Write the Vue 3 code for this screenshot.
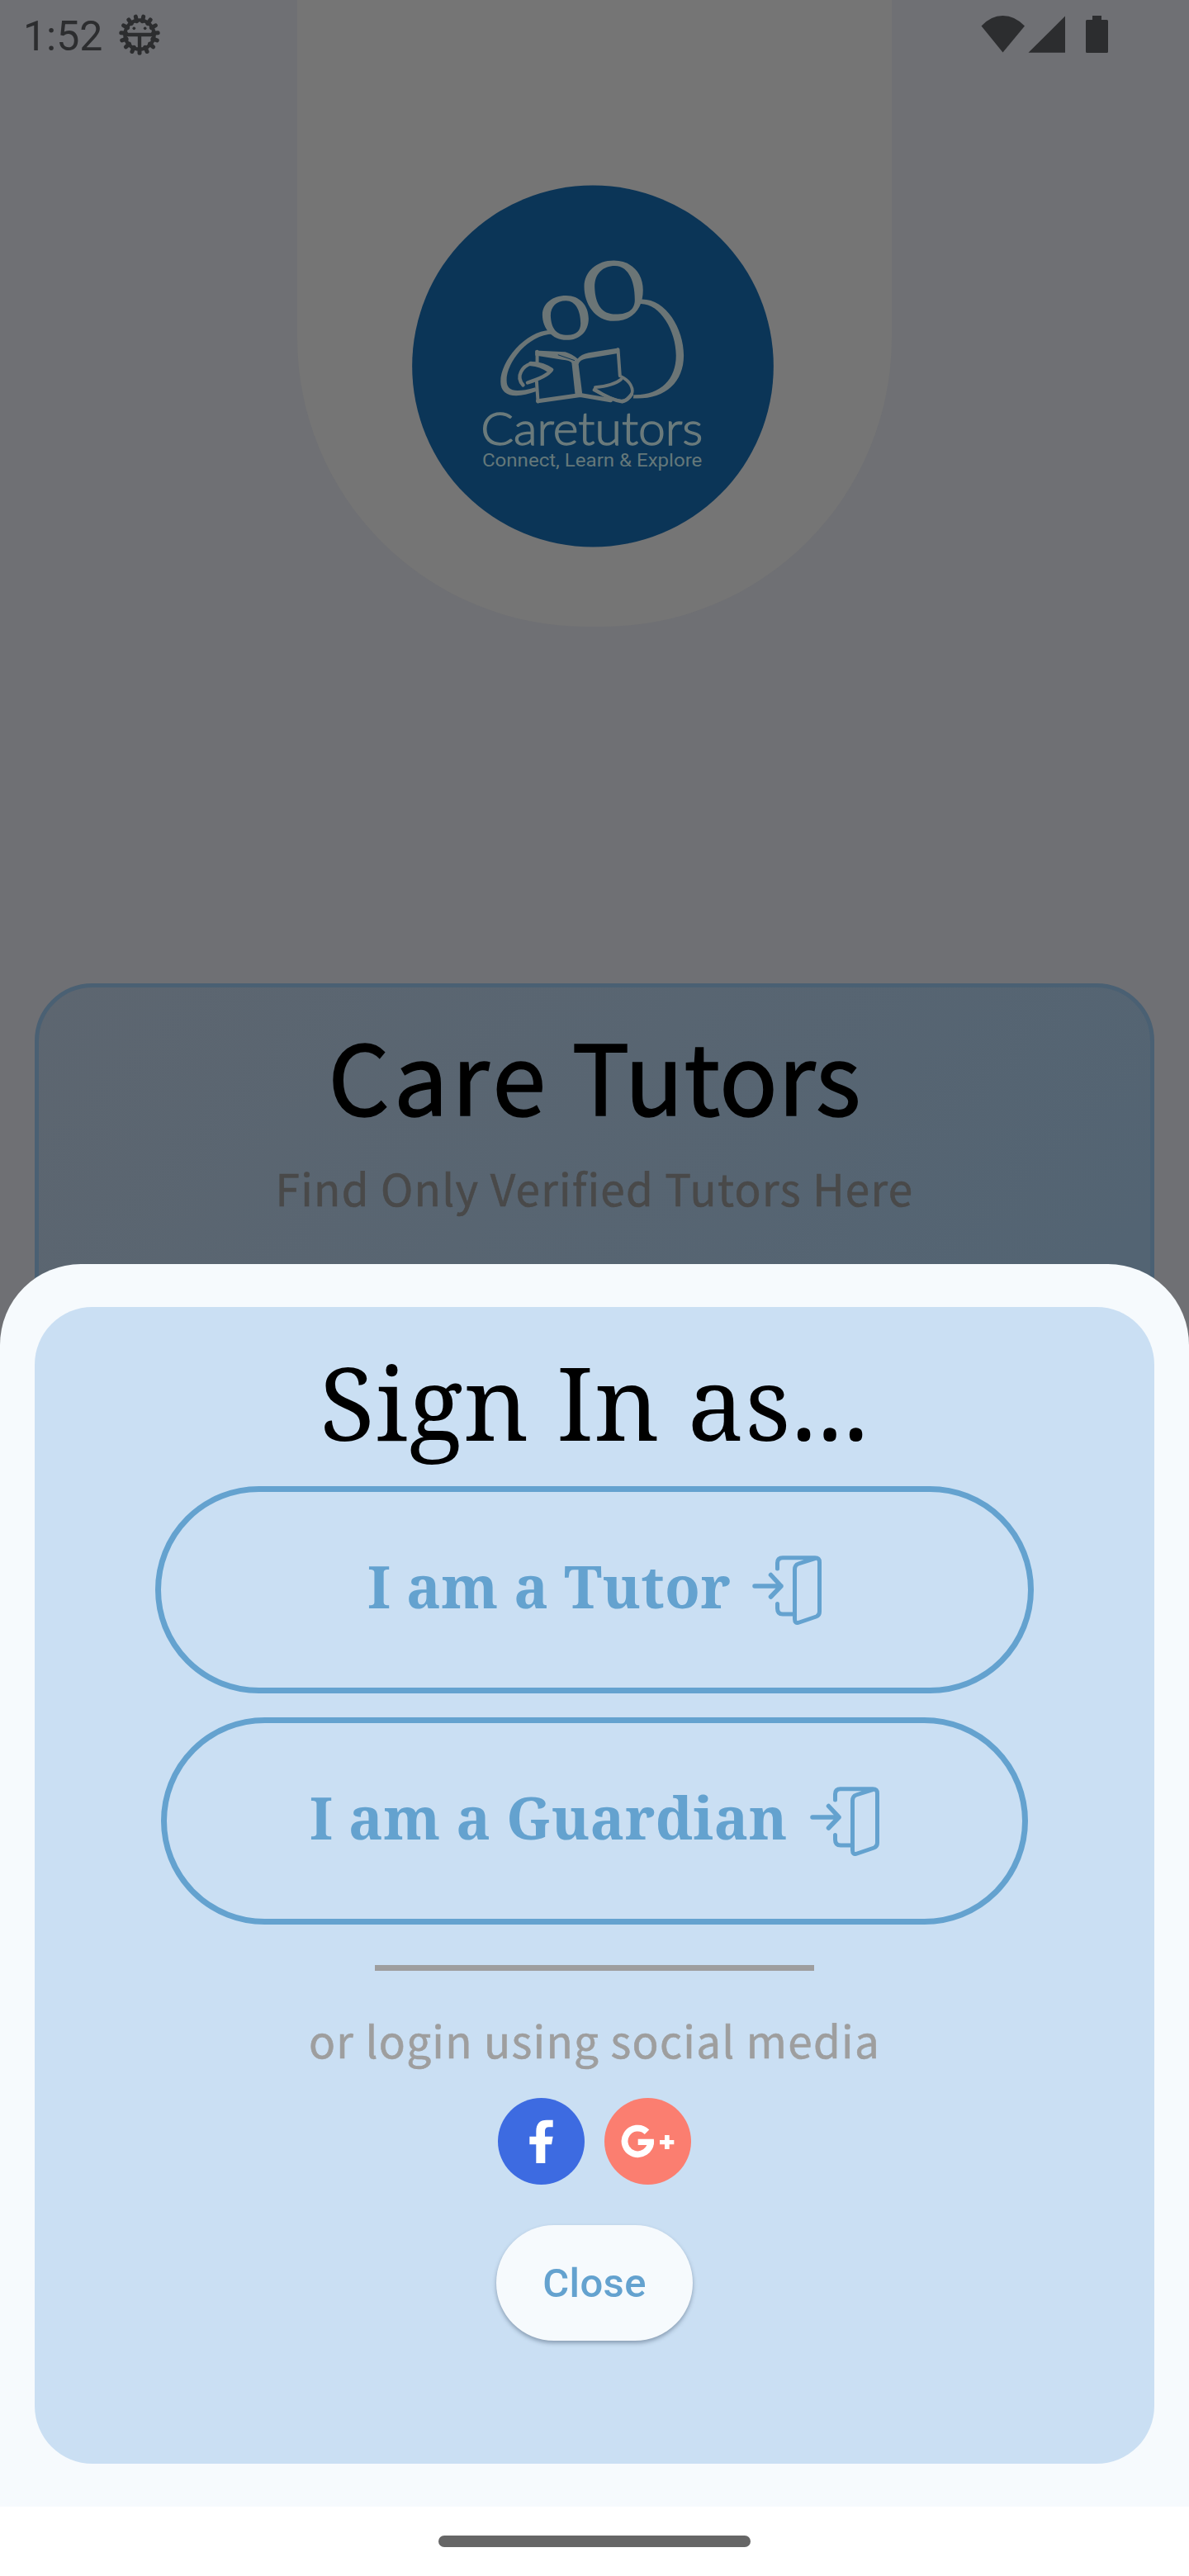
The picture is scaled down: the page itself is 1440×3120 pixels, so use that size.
<script setup>
const roles = [
  { id: 'tutor', label: 'I am a Tutor' },
  { id: 'guardian', label: 'I am a Guardian' },
]
const teeth = Array.from({ length: 15 }, (_, i) => i * 24)
</script>

<template>
  <div class="screen">
    <header class="status">
      <span class="clock">1:52</span>
      <svg class="debug" viewBox="433 52 150 150" width="50" height="50">
        <g stroke="#2c2d2f" stroke-width="15" stroke-linecap="round">
          <line v-for="a in teeth" :key="a" x1="508" y1="177" x2="508" y2="194" :transform="`rotate(${a} 508 127)`" />
        </g>
        <circle cx="508" cy="127" r="53" fill="none" stroke="#2c2d2f" stroke-width="13" />
        <path d="M460 127H556M508 127V176" stroke="#2c2d2f" stroke-width="13" />
        <circle cx="488" cy="104" r="5.5" fill="#2c2d2f" />
        <circle cx="528" cy="104" r="5.5" fill="#2c2d2f" />
      </svg>
      <svg class="signals" viewBox="0 0 156 46" width="156" height="46" fill="#2c2d2f">
        <path d="M0.5 12.5Q12 0 26.5 0T53 12.5L26.5 44.5Z" />
        <path d="M57.5 44.8L102 0.5V44.8Z" />
        <path d="M135 0h11v5h6.500q1.500 0 1.500 1.500v37q0 1.500-1.500 1.500h-24q-1.500 0-1.500-1.500v-37q0-1.500 1.500-1.500h6.500z" />
      </svg>
    </header>

    <div class="arch">
      <svg class="logo" viewBox="58 71 1315 1316" width="438" height="439">
        <ellipse cx="715.500" cy="729" rx="657" ry="657.500" fill="#0b3557" />
        <g fill="#6b7576" fill-rule="evenodd">
          <path d="M792 345C856 345 898 390 898 452C898 522 858 565 792 565C722 565 684 500 684 440C684 385 730 345 792 345ZM796 364C752 364 722 392 722 440C724 505 748 540 798 540C846 540 868 522 868 488C868 415 842 364 796 364Z" />
          <path d="M618 472C668 472 700 508 700 556C700 602 668 634 620 634C568 634 532 592 532 542C532 502 568 472 618 472ZM618 491C584 491 562 512 562 545C564 592 582 616 624 616C656 616 671 600 671 574C671 526 652 491 618 491Z" />
          <path d="M888 486C978 480 1046 590 1046 690C1046 790 975 852 862 846L864 833C960 836 1018 778 1018 690C1018 600 960 500 888 502Z" />
          <path d="M560 598C470 602 380 710 380 785C380 838 430 850 512 820L506 806C435 826 402 822 402 780C402 715 480 614 570 612Z" />
          <path d="M506 672L615 677Q640 684 660 702Q672 686 700 680L808 663L810 682L690 702Q668 706 663 722L640 718Q632 708 605 706L506 690Z" />
          <path d="M638 710L662 710L678 838L652 840Z" />
        </g>
        <g fill="none" stroke="#6b7576" stroke-width="12" stroke-linecap="round" stroke-linejoin="round">
          <path d="M513 676V714M511 785L516 858" />
          <path d="M516 856L670 834L780 853" stroke-width="15" />
          <path d="M807 668L814 764" />
          <path d="M462 798C432 765 462 728 490 720Q530 716 566 742Q548 768 478 789" stroke-width="13" />
          <path d="M490 720Q525 722 558 745" stroke-width="17" />
          <path d="M724 806Q790 800 818 777M820 768C850 782 866 812 856 832C836 868 806 862 720 816" stroke-width="11" />
          <path d="M722 814Q780 852 822 858Q840 854 856 832" stroke-width="13" />
          <path d="M590 688L648 708" stroke="#0b3557" stroke-width="3" />
        </g>
        <text class="brand" x="308" y="1016" textLength="808" lengthAdjust="spacingAndGlyphs">Caretutors</text>
        <text class="tagline" x="313" y="1094" textLength="800" lengthAdjust="spacingAndGlyphs">Connect, Learn &amp; Explore</text>
      </svg>
    </div>

    <main class="card">
      <h1><span class="wide">Care</span> Tutors</h1>
      <p>Find Only Verified Tutors Here</p>
    </main>

    <section class="sheet">
      <div class="panel">
        <h2>Sign In as...</h2>
        <button v-for="r in roles" :key="r.id" class="role" :class="r.id">
          <span>{{ r.label }}</span>
          <svg viewBox="0 0 84 84" width="84" height="84" fill="none" stroke="#64a2cf" stroke-width="5" stroke-linecap="round" stroke-linejoin="round">
            <path d="M30.500 16V9Q30.500 2.700 37 2.700H76Q81.500 2.700 81.500 8V68Q81.500 72.500 77.500 74L57 81Q51.500 83 51.500 77V17Q51.500 11.500 56 10L76 3.500" />
            <path d="M30.500 58.500V64Q30.500 71 37 71H51" />
            <path d="M3 37H35M22.500 23.500L35 37L22.500 50" stroke-width="5.500" />
          </svg>
        </button>
        <div class="divider"></div>
        <p class="hint">or login using social media</p>
        <div class="social">
          <svg viewBox="128 123 315 315" width="105" height="105">
            <circle cx="285.500" cy="280.500" r="157.500" fill="#3d6be1" />
            <path fill="#fff" d="M267 360V292H243V263H267V243C267 216 281 203 305 203H328V229H313C304 229 299 234 299 243V263H328L323 292H300V360Z" />
          </svg>
          <svg viewBox="516 123 315 315" width="105" height="105">
            <circle cx="673.500" cy="280.500" r="157.500" fill="#fb7e70" />
            <path d="M670.500 246.500A47.500 47.500 0 1 0 684.500 284" fill="none" stroke="#fff" stroke-width="23.500" />
            <path fill="#fff" d="M638 272H695.500Q698 283 694 294H638ZM717 276H735V258H752V276H769V292H752V309H735V292H717Z" />
          </svg>
        </div>
        <button class="close">Close</button>
      </div>
    </section>

    <footer class="nav"><div class="handle"></div></footer>
  </div>
</template>

<style>
body {
  margin: 0;
}
</style>

<style scoped>
.screen {
  position: relative;
  width: 1440px;
  height: 3120px;
  overflow: hidden;
  background: #6f7074;
  display: flex;
  flex-direction: column;
}
h1,
h2,
p {
  margin: 0;
  font-weight: 400;
  white-space: nowrap;
}
button {
  padding: 0;
  box-sizing: border-box;
}
.status {
  position: absolute;
  z-index: 1;
  top: 0;
  left: 0;
  width: 1440px;
  height: 86px;
  display: flex;
  align-items: flex-start;
}
.clock {
  margin: 15px 0 0 28px;
  width: 116px;
  font: 400 50px/58px Roboto, sans-serif;
  color: #2c2d2f;
}
.debug {
  margin-top: 17px;
}
.signals {
  margin: 19px 96px 0 auto;
}
.arch {
  flex: none;
  width: 720px;
  height: 759px;
  margin: 0 auto;
  border-radius: 0 0 350px 350px;
  background: #757575;
}
.logo {
  display: block;
  margin: 223.500px 0 0 139px;
}
.brand {
  font: 300 168px Lato, sans-serif;
  fill: #6b7b7c;
  stroke: #6b7b7c;
  stroke-width: 4px;
}
.tagline {
  font: 400 64px Roboto, sans-serif;
  fill: #64787a;
}
.card {
  flex: none;
  box-sizing: border-box;
  width: 1356px;
  height: 700px;
  margin: 432px auto 0;
  padding-top: 19px;
  border: 5px solid #4a6073;
  border-radius: 70px;
  background: linear-gradient(135deg, #5d6670, #536473 80%);
  text-align: center;
}
.card h1 {
  font: 400 117px/170px "Noto Sans CJK JP", sans-serif;
  letter-spacing: 0.4px;
  color: #000;
  -webkit-text-stroke: 1.5px #000;
}
.card .wide {
  letter-spacing: 4.8px;
}
.card p,
.hint {
  font: 400 53px/77px "Noto Sans CJK JP", sans-serif;
  letter-spacing: 1.3px;
}
.card p {
  margin-top: 15px;
  color: #494949;
  -webkit-text-stroke: 0.6px #494949;
}
.sheet {
  position: absolute;
  top: 1531px;
  left: 0;
  width: 1440px;
  height: 1505px;
  box-sizing: border-box;
  padding: 52px 42px;
  border-radius: 98px 98px 0 0;
  background: #f6fafd;
}
.panel {
  box-sizing: border-box;
  height: 1401px;
  padding-top: 31px;
  border-radius: 70px;
  background: #cadff3;
  display: flex;
  flex-direction: column;
  align-items: center;
}
.panel h2 {
  font: 400 122.500px/167px "Noto Serif", "DejaVu Serif Condensed", "DejaVu Serif", serif;
  letter-spacing: 0.85px;
  color: #000;
}
.role {
  height: 251px;
  border: 7px solid #64a2cf;
  border-radius: 126px;
  background: none;
  color: #64a2cf;
  display: flex;
  align-items: center;
  justify-content: space-between;
  font: 700 70px/90px "Noto Serif", "DejaVu Serif Condensed", "DejaVu Serif", serif;
  letter-spacing: 0.35px;
  white-space: nowrap;
}
.role span {
  margin-bottom: 9px;
}
.tutor {
  width: 1064px;
  margin-top: 19px;
  padding: 0 250px;
}
.guardian {
  width: 1050px;
  margin-top: 29px;
  padding: 0 173px;
}
.divider {
  width: 532px;
  height: 7px;
  margin-top: 49px;
  background: #9e9e9e;
}
.hint {
  margin-top: 45px;
  color: #9e9e9e;
  -webkit-text-stroke: 0.6px #9e9e9e;
}
.social {
  margin-top: 32px;
  display: flex;
  gap: 24px;
}
.close {
  width: 238px;
  height: 140px;
  margin-top: 49px;
  padding-top: 2px;
  border: 0;
  border-radius: 70px;
  background: #f6fafd;
  box-shadow: 0 3px 5px rgba(60, 80, 105, 0.45);
  color: #64a2cf;
  font: 500 49px/58px Roboto, sans-serif;
  letter-spacing: 0.35px;
}
.nav {
  position: absolute;
  top: 3036px;
  left: 0;
  width: 1440px;
  height: 84px;
  background: #fff;
}
.handle {
  width: 378px;
  height: 14px;
  margin: 35px auto 0;
  border-radius: 7px;
  background: #666;
}
</style>
